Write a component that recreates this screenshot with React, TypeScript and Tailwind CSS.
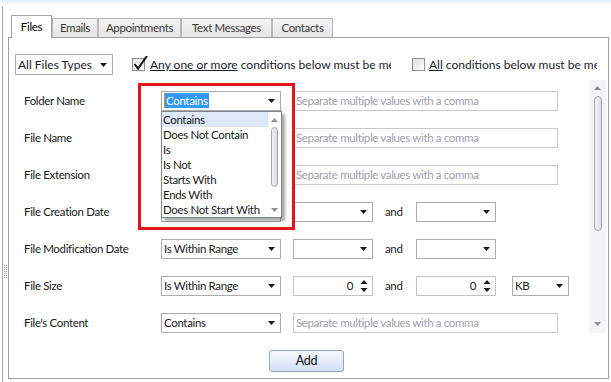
import React from "react";

const Arrow = () => (
  <svg width="7" height="4" viewBox="0 0 7 4" className="shrink-0">
    <path d="M0 0 H7 L3.5 4 Z" fill="#1a1a1a" />
  </svg>
);

function Combo({
  w,
  text,
  selected,
  h = "h-[20px]",
  big,
}: {
  w: string;
  text?: string;
  selected?: boolean;
  h?: string;
  big?: boolean;
}) {
  return (
    <div
      className={`${w} ${h} shrink-0 border border-[#acacac] bg-white flex items-center justify-between pl-[2px] pr-[5px]`}
    >
      <span className={`whitespace-nowrap leading-none ${big ? "text-[12px] tracking-normal" : ""}`}>
        {selected ? (
          <span className="bg-[#3399ff] text-white px-[1px] py-[1px] border-l border-[#e58a1f]">{text}</span>
        ) : (
          text
        )}
      </span>
      <Arrow />
    </div>
  );
}

function TextBox() {
  return (
    <div className="w-[265px] h-[20px] shrink-0 border border-[#c9c9c9] bg-white flex items-center pl-[2px] text-[#a0a0ac] whitespace-nowrap leading-none">
      Separate multiple values with a comma
    </div>
  );
}

function Spin() {
  return (
    <div className="w-[80px] h-[20px] shrink-0 border border-[#c4c4c4] bg-white flex items-center justify-end pr-[4px] leading-none">
      <span className="mr-[7px]">0</span>
      <svg width="8" height="14" viewBox="0 0 8 14">
        <path d="M0.5 5 H7.5 L4 1 Z" fill="#1a1a1a" />
        <path d="M0.5 9 H7.5 L4 13 Z" fill="#1a1a1a" />
      </svg>
    </div>
  );
}

function Row({ label, children }: { label: string; children?: React.ReactNode }) {
  return (
    <div className="h-[37px] flex items-center shrink-0">
      <div className="w-[152px] pl-[15px] whitespace-nowrap shrink-0">{label}</div>
      <div className="flex items-center">{children}</div>
    </div>
  );
}

function Range() {
  return (
    <>
      <div className="w-[12px]" />
      <Combo w="w-[80px]" />
      <div className="w-[43px] pl-[12px]">and</div>
      <Combo w="w-[80px]" />
    </>
  );
}

function Tab({ label, w, active }: { label: string; w: string; active?: boolean }) {
  if (active) {
    return (
      <div
        className={`${w} h-[23px] bg-white border border-b-0 border-[#a3a3a3] flex items-center justify-center text-[#000] pb-[1px]`}
      >
        {label}
      </div>
    );
  }
  return (
    <div
      className={`${w} h-[19px] mb-[1px] bg-gradient-to-b from-[#f3f3f3] to-[#e6e6e6] border border-b-0 border-[#b7b7b7] flex items-center justify-center text-[#3a3a3a]`}
    >
      {label}
    </div>
  );
}

export default function App() {
  const items = [
    "Contains",
    "Does Not Contain",
    "Is",
    "Is Not",
    "Starts With",
    "Ends With",
    "Does Not Start With",
  ];
  return (
    <div className="w-[611px] h-[382px] bg-white overflow-hidden flex flex-col relative text-[11.5px] tracking-[-0.35px] text-[#1b1b1b] [font-family:Lato,'Liberation_Sans',sans-serif]">
      <div className="h-[3px] bg-[#e9f3fa] shrink-0" />
      <div className="flex flex-1">
        {/* left gutter with splitter line and grip */}
        <div className="w-[8px] flex pt-[3px] shrink-0">
          <div className="ml-[2px] w-[1px] bg-[#a9a9a9]" />
          <div className="pt-[259px] pl-[1px]">
            <svg width="3" height="13" viewBox="0 0 3 13">
              {Array.from({ length: 7 }).map((_, i) => (
                <React.Fragment key={i}>
                  <rect x="0" y={i * 2} width="1" height="1" fill="#9a9a9a" />
                  <rect x="2" y={i * 2} width="1" height="1" fill="#9a9a9a" />
                </React.Fragment>
              ))}
            </svg>
          </div>
        </div>

        <div className="flex flex-col w-[601px]">
          {/* tabs */}
          <div className="h-[35px] flex items-end pl-[3px] -mb-px relative z-10 shrink-0">
            <Tab label="Files" w="w-[41px]" active />
            <Tab label="Emails" w="w-[46px]" />
            <Tab label="Appointments" w="w-[83px]" />
            <Tab label="Text Messages" w="w-[91px]" />
            <Tab label="Contacts" w="w-[61px]" />
          </div>

          {/* panel */}
          <div className="h-[342px] border border-[#a0a0a0] bg-white flex flex-col">
            {/* filter row */}
            <div className="mt-[16px] ml-[6px] h-[21px] flex items-center shrink-0 text-[12px] tracking-normal">
              <Combo w="w-[98px]" h="h-[21px]" text="All Files Types" big />
              <div className="ml-[19px] w-[259px] overflow-hidden flex items-center whitespace-nowrap">
                <div className="relative w-[13px] h-[13px] shrink-0 border border-[#8e8f8f] bg-gradient-to-br from-[#e6e6e6] to-[#ffffff]">
                  <svg
                    width="16"
                    height="16"
                    viewBox="0 0 16 16"
                    className="absolute left-[0px] top-[-4px]"
                  >
                    <path d="M1.5 9 L5 13.5 L14 1" stroke="#111" strokeWidth="2" fill="none" />
                  </svg>
                </div>
                <span className="ml-[5px] text-[#1c1c30]">
                  <span className="underline">Any one or more</span> conditions below must be met
                </span>
              </div>
              <div className="ml-[21px] w-[185px] overflow-hidden flex items-center whitespace-nowrap">
                <div className="w-[13px] h-[13px] shrink-0 border border-[#8e8f8f] bg-gradient-to-br from-[#dedede] to-[#ffffff]" />
                <span className="ml-[4px] text-[#1c1c30]">
                  <span className="underline">All</span> conditions below must be met
                </span>
              </div>
            </div>

            {/* scroll area */}
            <div className="mt-[5px] h-[253px] flex shrink-0">
              <div className="w-[580px] pt-[2px] overflow-hidden flex flex-col">
                <Row label="Folder Name">
                  <Combo w="w-[120px]" text="Contains" selected />
                  <div className="w-[12px]" />
                  <TextBox />
                </Row>
                <Row label="File Name">
                  <Combo w="w-[120px]" text="Contains" />
                  <div className="w-[12px]" />
                  <TextBox />
                </Row>
                <Row label="File Extension">
                  <Combo w="w-[120px]" text="Contains" />
                  <div className="w-[12px]" />
                  <TextBox />
                </Row>
                <Row label="File Creation Date">
                  <Combo w="w-[120px]" text="Is Within Range" />
                  <Range />
                </Row>
                <Row label="File Modification Date">
                  <Combo w="w-[120px]" text="Is Within Range" />
                  <Range />
                </Row>
                <Row label="File Size">
                  <Combo w="w-[120px]" text="Is Within Range" />
                  <div className="w-[12px]" />
                  <Spin />
                  <div className="w-[43px] pl-[12px]">and</div>
                  <Spin />
                  <div className="w-[16px]" />
                  <Combo w="w-[57px]" text="KB" />
                </Row>
                <Row label="File's Content">
                  <Combo w="w-[120px]" text="Contains" />
                  <div className="w-[12px]" />
                  <TextBox />
                </Row>
              </div>
              {/* scrollbar */}
              <div className="w-[17px] bg-[#f4f4f6] flex flex-col items-center">
                <svg width="7" height="4" viewBox="0 0 7 4" className="mt-[6px]">
                  <path d="M0 4 H7 L3.5 0 Z" fill="#8e8e8e" />
                </svg>
                <div className="mt-[6px] w-[8px] h-[135px] rounded-[4px] border border-[#a3a3a8] bg-gradient-to-r from-[#f2f2f6] to-[#dcdce3]" />
                <div className="flex-1" />
                <svg width="7" height="4" viewBox="0 0 7 4" className="mb-[7px]">
                  <path d="M0 0 H7 L3.5 4 Z" fill="#8e8e8e" />
                </svg>
              </div>
            </div>

            {/* Add button */}
            <div className="mt-[17px] ml-[260px] w-[75px] h-[22px] rounded-[3px] border border-[#9aa3b4] bg-gradient-to-b from-[#f6f8fd] to-[#d5e1f8] flex items-center justify-center text-[12.5px] text-[#111] shrink-0">
              Add
            </div>
          </div>
        </div>
      </div>

      {/* red highlight rectangle */}
      <div className="absolute left-[138px] top-[83px] w-[157px] h-[147px] border-[3px] border-[#e3161e] pointer-events-none" />

      {/* open dropdown list */}
      <div className="absolute left-[161px] top-[111px] w-[121px] h-[107px] border border-[#7f8590] bg-white shadow-[3px_3px_3px_rgba(0,0,0,0.35)] flex">
        <div className="flex-1 flex flex-col">
          {items.map((t, i) => (
            <div
              key={t}
              className={`h-[15px] flex items-center pl-[1px] whitespace-nowrap leading-none ${
                i === 0 ? "bg-[#dfe8f8]" : ""
              }`}
            >
              {t}
            </div>
          ))}
        </div>
        <div className="w-[13px] flex flex-col items-center bg-white">
          <svg width="7" height="4" viewBox="0 0 7 4" className="mt-[6px]">
            <path d="M0 4 H7 L3.5 0 Z" fill="#8e8e8e" />
          </svg>
          <div className="mt-[5px] w-[7px] h-[60px] rounded-[4px] border border-[#a3a3a8] bg-gradient-to-r from-[#f2f2f6] to-[#dcdce3]" />
          <div className="flex-1" />
          <svg width="7" height="4" viewBox="0 0 7 4" className="mb-[5px]">
            <path d="M0 0 H7 L3.5 4 Z" fill="#8e8e8e" />
          </svg>
        </div>
      </div>
    </div>
  );
}
